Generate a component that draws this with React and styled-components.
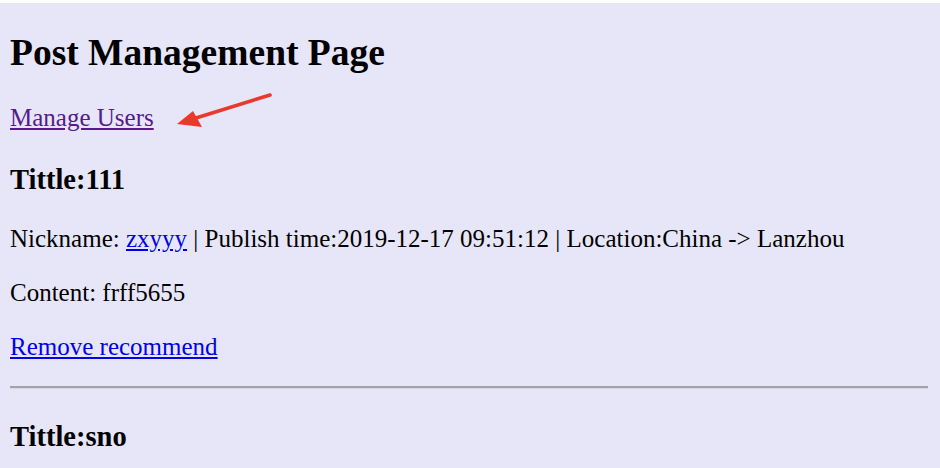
import React from "react";
import styled, { createGlobalStyle } from "styled-components";

const GlobalStyle = createGlobalStyle`
  html, body {
    margin: 0;
    padding: 0;
    background: #ffffff;
    overflow: hidden;
  }
  body {
    font-family: "Liberation Serif", "Times New Roman", serif;
    color: #000;
  }
`;

const Page = styled.div`
  position: relative;
  margin-top: 3px;
  padding: 28px 12px 0 10px;
  height: 465px;
  overflow: hidden;
  box-sizing: border-box;
  background-color: #e6e6f8;
`;

const Title = styled.h1`
  margin: 0 0 29px;
  font-size: 37.5px;
  line-height: 43px;
  font-weight: bold;
`;

const Text = styled.p`
  margin: 25px 0;
  font-size: 25px;
  line-height: 29px;
`;

const NavLink = styled.a`
  color: ${(props) => (props.visited ? "#551a8b" : "#0000ee")};
  text-decoration: underline;
  cursor: pointer;
`;

const PostTitle = styled.h3`
  margin: 31px 0 28px;
  font-size: 28.5px;
  line-height: 33px;
  font-weight: bold;
`;

const Divider = styled.hr`
  margin: 25px 0 30px;
  height: 0;
  border: none;
  border-top: 2px solid #a3a3a6;
  border-bottom: 1px solid #d8d8e4;
`;

const Arrow = styled.svg`
  position: absolute;
  left: 170px;
  top: 84px;
  overflow: visible;
`;

const posts = [
  {
    id: 1,
    title: "111",
    nickname: "zxyyy",
    time: "2019-12-17 09:51:12",
    location: "China -> Lanzhou",
    content: "frff5655",
  },
  {
    id: 2,
    title: "sno",
  },
];

const Post = ({ post, last }) => (
  <section>
    <PostTitle>Tittle:{post.title}</PostTitle>
    {!last && (
      <>
        <Text>
          Nickname: <NavLink>{post.nickname}</NavLink> | Publish time:{post.time} | Location:
          {post.location}
        </Text>
        <Text>Content: {post.content}</Text>
        <Text>
          <NavLink>Remove recommend</NavLink>
        </Text>
        <Divider />
      </>
    )}
  </section>
);

const App = () => {
  return (
    <>
      <GlobalStyle />
      <Page>
        <Title>Post Management Page</Title>
        <Text>
          <NavLink visited>Manage Users</NavLink>
        </Text>
        {posts.map((post, index) => (
          <Post key={post.id} post={post} last={index === posts.length - 1} />
        ))}

        {/* red annotation arrow */}
        <Arrow width="110" height="50" viewBox="0 0 110 50">
          <line x1="100" y1="8" x2="26" y2="31" stroke="#e8392c" strokeWidth="3.6" strokeLinecap="round" />
          <polygon points="7,37 23,24 32,40" fill="#e8392c" />
        </Arrow>
      </Page>
    </>
  );
};

export default App;
